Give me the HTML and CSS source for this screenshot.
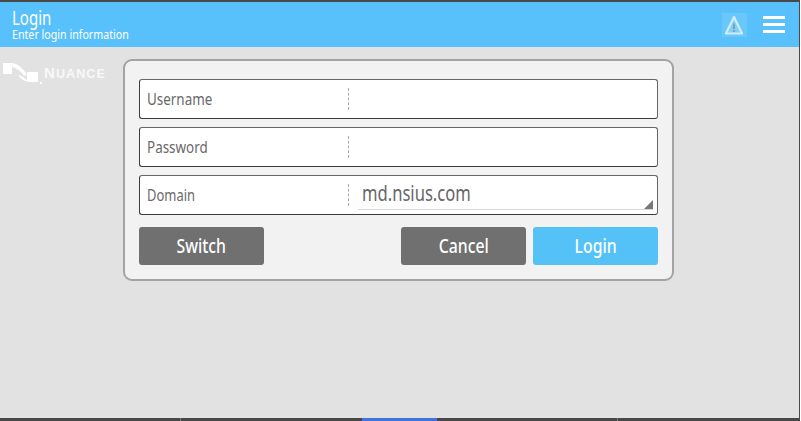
FILE: index.html
```html
<!DOCTYPE html>
<html lang="en">
<head>
<meta charset="utf-8">
<title>Login</title>
<link rel="stylesheet" href="styles.css">
</head>
<body>
<div class="screen">
  <div class="topline"></div>
  <header class="header">
    <div class="titles">
      <div class="title"><span class="squeeze">Login</span></div>
      <div class="subtitle"><span class="squeeze">Enter login information</span></div>
    </div>
    <div class="actions">
      <div class="warn">
        <svg width="25" height="24" viewBox="0 0 25 24">
          <path d="M12 4 L20 20.500 H4 Z" fill="#82cff8" stroke="#cdeeff" stroke-width="2.200" stroke-linejoin="round"/>
          <path d="M12 10.500 V16" stroke="#6f93aa" stroke-width="1.500"/>
          <path d="M12 17 V19" stroke="#6f93aa" stroke-width="1.500"/>
        </svg>
      </div>
      <div class="menu"><span></span><span></span><span></span></div>
    </div>
  </header>
  <main class="main">
    <div class="logo">
      <svg class="logo-mark" width="40" height="24" viewBox="0 0 40 24">
        <path d="M0 0 H9 C15 1 20 5 24 12 L21 13 C19 9 14 5 9 4 V11 H0 Z" fill="#fff"/>
        <path d="M15 12 C18 12 21 15 24 17 V9 H35 V19 H27 C22 19 18 16 15 12 Z" fill="#fff"/>
        <rect x="37" y="19" width="2" height="2" fill="#fff"/>
      </svg>
      <span class="logo-text"><span class="logo-n">N</span>UANCE</span>
    </div>
    <section class="card">
      <div class="field">
        <div class="label"><span class="squeeze">Username</span></div>
        <div class="value"></div>
      </div>
      <div class="field">
        <div class="label"><span class="squeeze">Password</span></div>
        <div class="value"></div>
      </div>
      <div class="field">
        <div class="label label-small"><span class="squeeze">Domain</span></div>
        <div class="value">
          <div class="select"><span class="squeeze">md.nsius.com</span><span class="corner"></span></div>
        </div>
      </div>
      <div class="buttons">
        <button class="btn btn-grey"><span class="squeeze squeeze-mid">Switch</span></button>
        <div class="spacer"></div>
        <button class="btn btn-grey"><span class="squeeze squeeze-mid">Cancel</span></button>
        <button class="btn btn-blue"><span class="squeeze squeeze-mid">Login</span></button>
      </div>
    </section>
  </main>
  <footer class="taskbar">
    <div class="task"></div>
    <div class="task"></div>
    <div class="task-active"></div>
    <div class="task"></div>
    <div class="task"></div>
  </footer>
</div>
</body>
</html>
```
FILE: styles.css
```css
* { box-sizing: border-box; }
html, body { margin: 0; padding: 0; }
body { width: 801px; height: 421px; overflow: hidden; background: #fff; font-family: "Noto Sans", sans-serif; }
.screen { width: 800px; height: 421px; display: flex; flex-direction: column; background: #e2e2e2; border-right: 1px solid #4a4a4a; }
.squeeze { display: inline-block; transform: scaleX(0.79); transform-origin: left center; white-space: nowrap; }
.squeeze-mid { transform-origin: center; }
.topline { height: 2px; background: #484848; flex: none; }
.header { height: 45px; flex: none; background: #58c1fb; display: flex; justify-content: space-between; color: #fff; padding: 0 14px 0 12px; }
.titles { padding-top: 6px; }
.title { font-size: 19px; line-height: 20px; }
.subtitle { font-size: 13px; line-height: 13px; }
.subtitle .squeeze { transform: scaleX(0.82); }
.actions { display: flex; align-items: center; gap: 16px; }
.warn { width: 25px; height: 24px; background: #69c7fa; }
.warn svg { display: block; }
.menu { width: 22px; display: flex; flex-direction: column; gap: 4px; margin-top: -1px; }
.menu span { height: 3px; background: #fff; }
.main { flex: 1; display: flex; align-items: flex-start; padding: 13px 0 0 3px; }
.logo { width: 120px; flex: none; display: flex; align-items: flex-start; height: 26px; padding-top: 3px; }
.logo-mark { flex: none; }
.logo-text { color: #f8f8f8; font-family: "Liberation Sans", sans-serif; font-weight: 700; font-size: 12.500px; letter-spacing: 1.100px; margin: 3px 0 0 1px; line-height: 14px; white-space: nowrap; }
.logo-n { font-size: 15px; }
.card { width: 551px; height: 222px; background: #f2f2f2; border: 2px solid #a3a3a3; border-radius: 9px; padding: 18px 14px 0 14px; display: flex; flex-direction: column; gap: 8px; margin-top: -1px; }
.field { height: 40px; background: #fff; border: 1px solid #3c3c3c; border-top-color: #666; border-right-color: #666; border-radius: 3px; display: flex; align-items: center; flex: none; }
.label { width: 208px; padding-left: 7px; font-size: 17px; color: #6a6a6a; flex: none; margin-top: -2px; }
.label-small { font-size: 16px; margin-top: 0; }
.label-small .squeeze { transform: scaleX(0.81); }
.value { flex: 1; height: 22px; border-left: 1px dashed #a8a8a8; align-self: center; position: relative; }
.select { position: absolute; left: 9px; right: 4px; top: -7px; height: 33px; border-bottom: 1px solid #d9d9d9; padding-left: 4px; font-size: 21px; line-height: 33px; color: #666; }
.corner { position: absolute; right: 0; bottom: 0; width: 0; height: 0; border-style: solid; border-width: 0 0 9px 9px; border-color: transparent transparent #777 transparent; }
.buttons { display: flex; gap: 7px; margin-top: 4px; }
.spacer { flex: 1; }
.btn { width: 125px; height: 38px; border: 0; border-radius: 3px; color: #fff; font-family: inherit; font-size: 20px; font-weight: 500; padding: 0 0 2px; }
.btn-grey { background: #707070; }
.btn-blue { background: #54c2f6; }
.taskbar { height: 3px; flex: none; background: #484848; display: flex; }
.task { flex: 0 0 181px; }
.task:first-child { border-right: 1px solid #777; }
.task:nth-child(4) { border-right: 1px solid #777; }
.task:last-child { flex: 1; }
.task-active { flex: 0 0 75px; background: #3f74db; }
```
